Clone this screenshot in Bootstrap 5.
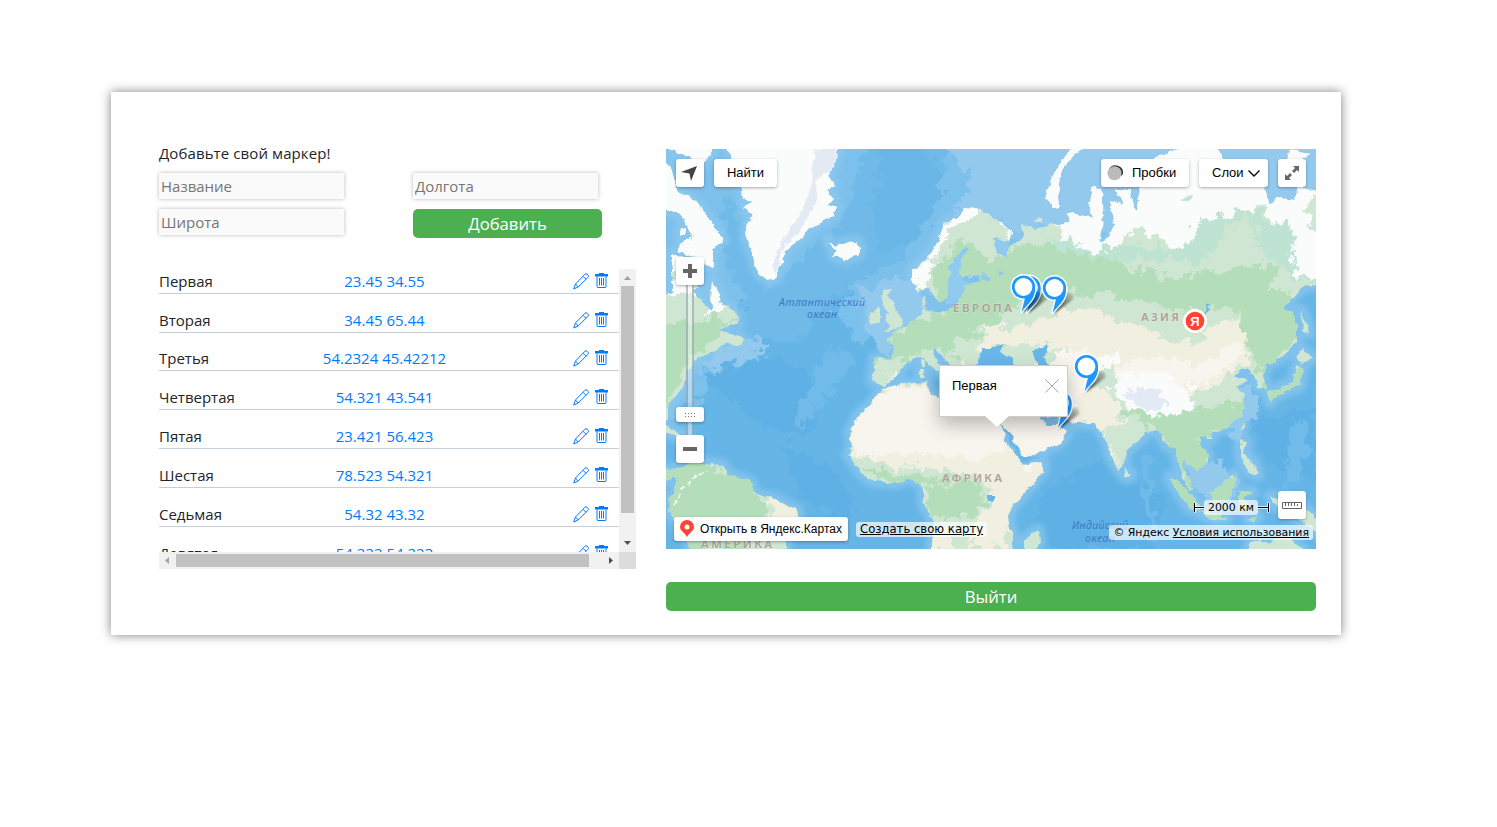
<!DOCTYPE html>
<html lang="ru">
<head>
<meta charset="utf-8">
<meta name="viewport" content="width=device-width, initial-scale=1">
<title>Маркеры</title>
<link href="https://cdn.jsdelivr.net/npm/bootstrap@5.3.0/dist/css/bootstrap.min.css" rel="stylesheet">
<style>
body{font-family:"Open Sans","Noto Sans",sans-serif;font-size:15px;line-height:24px;color:#212529;background:#fff;min-height:100vh;display:flow-root}
.panel{width:1230px;height:543px;margin:92px 0 0 111px;padding:0 25px 0 48px;box-shadow:0 0 10px rgba(0,0,0,.5);gap:30px}
.side{width:477px;padding-top:49px}
.fields{display:grid;grid-template-columns:254px 189px;row-gap:10px;margin-top:8px}
.field{width:185px;height:26px;border:0;border-radius:0;padding:1px 2px 2px;background:#fafafa;box-shadow:0 0 4px rgba(0,0,0,.28);font-size:15px;line-height:22px}
.field::placeholder{color:#757575;opacity:1}
.btn-go{--bs-btn-color:#fff;--bs-btn-bg:#4caf50;--bs-btn-hover-bg:#43a047;--bs-btn-hover-color:#fff;border:0;border-radius:5px;height:29px;padding:0;font-size:16.7px;line-height:29px}
.listbox{height:300px;margin-top:31px;display:grid;grid-template-columns:460px 17px;grid-template-rows:283px 17px}
.item{height:25px;border-bottom:1px solid #c3d0da;margin-bottom:13.83px;display:grid;grid-template-columns:150px 151px 1fr;line-height:24px;color:#212529}
.item:first-child{margin-top:-.3px}
.coords{color:#007bff;text-align:center;white-space:nowrap}
.sb{background:#f1f1f1}
.thumb{background:#c1c1c1}
.map{width:650px;height:400px;margin-top:57px}
.map>svg{display:block}
.ctl{background:#fff;border-radius:3px;box-shadow:0 1px 3px rgba(0,0,0,.32);height:28px;font:13px/27px "Liberation Sans",Arial,sans-serif;color:#000}
.sq{width:28px}
.topbar{left:10px;right:10px;top:10px}
.zoom{left:10px;top:108px;width:28px;height:206px}
.track{left:10px;top:26px;width:8px;height:154px;background:rgba(255,255,255,.4);border:solid rgba(90,110,120,.4);border-width:0 2px}
.balloon{left:273px;top:216px;width:129px;height:52px;background:#fff;border:1px solid #ccc;box-shadow:0 8px 18px rgba(0,0,0,.25);font:13px/18px "Liberation Sans",Arial,sans-serif;color:#000;padding:11px 8px 0 12px}
.chip{background:rgba(255,255,255,.68);border-radius:3px;color:#000;font-family:"DejaVu Sans",Verdana,sans-serif;font-size:10.9px;line-height:15px;white-space:nowrap}
</style>
</head>
<body>
<main class="panel d-flex">
  <section class="side">
    <div style="letter-spacing:.1px">Добавьте свой маркер!</div>
    <form class="fields">
      <input class="form-control field" placeholder="Название">
      <input class="form-control field" placeholder="Долгота">
      <input class="form-control field" placeholder="Широта">
      <button type="button" class="btn btn-go w-100">Добавить</button>
    </form>
    <div class="listbox">
      <div class="overflow-hidden" id="items"></div>
      <div class="sb d-flex flex-column align-items-center">
        <svg width="17" height="17"><path d="M5 11h7L8.500 7z" fill="#a3a3a3"/></svg>
        <div class="thumb flex-shrink-0" style="width:13px;height:227px"></div>
        <svg class="mt-auto" width="17" height="17"><path d="M5 6h7l-3.500 4z" fill="#505050"/></svg>
      </div>
      <div class="sb d-flex align-items-center">
        <svg width="17" height="17"><path d="M10 5v7L6 8.500z" fill="#a3a3a3"/></svg>
        <div class="thumb" style="width:413px;height:13px"></div>
        <svg class="ms-auto" width="17" height="17"><path d="M7 5v7l4-3.500z" fill="#505050"/></svg>
      </div>
      <div style="background:#dcdcdc"></div>
    </div>
  </section>
  <section>
    <div class="map position-relative overflow-hidden">
      <svg width="650" height="400" viewBox="666 149 650 400">
        <defs>
          <filter id="rough" filterUnits="userSpaceOnUse" x="656" y="139" width="670" height="420"><feTurbulence type="fractalNoise" baseFrequency=".13" numOctaves="4" seed="4"/><feDisplacementMap in="SourceGraphic" scale="6" xChannelSelector="R" yChannelSelector="G"/></filter>
          <filter id="rougher" filterUnits="userSpaceOnUse" x="656" y="139" width="670" height="420"><feTurbulence type="fractalNoise" baseFrequency=".09" numOctaves="5" seed="9"/><feDisplacementMap in="SourceGraphic" scale="24" xChannelSelector="R" yChannelSelector="G"/></filter>
          <filter id="sea" filterUnits="userSpaceOnUse" x="656" y="139" width="670" height="420"><feGaussianBlur stdDeviation="2.500"/></filter>
          <filter id="ds" x="-50%" y="-50%" width="200%" height="200%"><feGaussianBlur stdDeviation="1"/></filter>
          <linearGradient id="sh" x1="0" y1="1" x2="1" y2="0"><stop offset="0" stop-color="#000" stop-opacity=".85"/><stop offset="1" stop-color="#000" stop-opacity=".1"/></linearGradient>
          <!-- all coastlines: Eurasia, Africa, the Americas, Greenland, islands -->
          <path id="land" d="M965 208L958 218L945 222L942 230L935 247L928 257L917 267L912 270V280L918 292L928 287L933 297L940 303L948 297L947 283L950 273L948 267L957 257L962 247L968 246V252L960 263V272L962 277L980 275V281L963 287L967 290L960 297L958 303L947 310L930 312L923 307L927 297L922 300L923 313L913 322L903 327L898 330L890 338L885 340L895 345L892 357L875 358L872 380L877 383L883 387L888 383L895 378L900 370L907 362L917 357L923 358L933 368L943 374L951 374L933 357L935 349L947 362L957 372L966 380L970 366L978 363L980 355L983 348L992 348L998 356L1008 356L1015 366V400L1000 423L1010 434L1022 458L1037 453L1060 443L1068 432L1058 425L1047 425L1040 415L1060 418L1077 423H1095L1100 431L1105 436L1110 453L1118 470L1123 467L1127 450L1143 437L1148 432L1158 430L1165 443L1170 448L1175 447L1178 463L1183 480L1190 490L1193 490L1190 480L1182 468L1183 459L1192 465L1197 470L1208 462V455L1200 443V437L1210 433L1227 428L1242 415L1245 408L1243 393L1237 387L1247 380L1233 377L1243 368L1253 372L1258 388L1266 389L1263 377L1267 365L1283 357L1297 340V327L1293 312L1283 308L1290 300L1303 287L1326 283V193L1298 187L1295 200L1277 197L1270 205L1264 187L1245 170L1228 168L1222 162L1217 140L1180 149L1160 155L1145 163L1140 190L1136 210L1130 188L1114 190L1120 204L1110 200L1114 225L1108 235L1100 242L1104 220L1102 190L1093 187L1088 205L1093 218L1080 215L1067 212L1070 222L1060 225L1050 223L1035 230L1030 228L1022 225L1023 237L1010 247L1005 257L997 253L993 238L1012 240L1013 230L997 220L982 210Z
            M883 388L907 383L928 382L927 390L938 397L990 398L1000 423L1007 443L1023 465L1043 462V470L1030 487L1012 507L1008 517L1013 537L1012 549L1004 560H934L932 549L933 520L923 503V487L910 478L897 483L880 482L873 482L860 472L852 460L848 455L852 447L850 433L857 417L872 403L877 395Z
            M656 474L664 470L672 469L680 467L690 464L703 463L722 465L730 475L750 482L757 495L773 498L797 510L798 517L787 540V560H697L687 540L670 513L668 500L675 490L677 477L666 480H656z
            M656 300L680 287H690L705 305L712 310L720 302L737 313L738 323L718 330L735 334L745 340L738 346L726 343L697 360L687 372L683 387L673 400L668 405V420L663 425H656z M656 425L670 428L690 438L680 438L666 432z
            M656 160L670 166L677 190L697 203L710 220L723 238L713 250V268L703 263L677 250L683 243L693 237L680 213L656 210z M713 282L720 297L716 311L711 299z M672 255L686 260L700 288L672 290z M681 228h5v7h-6z M666 140H715L710 156L700 165L690 158L670 150z
            M725 140L735 165L742 187L743 198L752 203L743 207L753 216L746 227L747 240L752 253L757 270L763 277L772 281L777 278V270L783 262L785 250L803 237L807 230L833 215L837 208L826 205L835 200L827 190L834 185L827 177L835 163L840 140z
            M828 242L835 246L846 242L856 241L860 248L858 255L845 260L833 255L836 251z
            M1095 140L1073 155L1063 170L1058 187L1060 207L1052 208L1045 198L1050 183L1057 167L1067 153L1080 145z M1037 218h5v4h-6z M1290 150L1310 154L1300 164L1288 160z
            M883 290L892 289L888 297L894 303L898 313L903 320L900 328L883 332L890 325L885 321L888 312L882 305z M870 312L880 307V322L870 325z
            M920 369h4v10h-4z M922 360h3v7h-3z M1169 477L1178 480L1190 493L1200 505V511L1190 509L1180 495z M1198 512L1212 513L1227 518L1215 520z M1209 492L1220 486L1233 474L1236 480L1229 500L1214 502z M1239 491L1253 492L1243 497L1250 507L1239 508z M1240 440L1247 443L1244 453L1252 461L1258 475L1250 473L1240 458z M1240 424L1244 421L1242 432z M1267 391L1280 388L1293 381L1296 367L1302 368L1300 386L1285 392L1273 397L1270 403z M1297 355L1303 349L1312 358L1301 366z M1301 310L1305 318L1309 333L1303 331z M1124 469L1131 474L1128 478L1124 477z M1270 496L1285 500L1300 504L1318 520V534L1300 520L1276 506z M1247 560L1250 543L1260 539L1270 544L1277 537L1290 536L1305 553z M1025 540L1038 530L1040 540L1034 560H1025z M1206 434h6v5h-5z M1248 520l10-4-4 6z"/>
          <clipPath id="cl"><use href="#land"/></clipPath>
        </defs>
        <rect x="666" y="149" width="650" height="400" fill="#65b5e7"/>
        <g filter="url(#rougher)">
          <path d="M656 139H1326V215L1000 240L900 310L860 345L835 310L860 275L820 285L780 300L740 300L700 400L656 420z" fill="#7cc0ec"/>
          <path d="M795 265L840 225L870 139H960L915 220L900 260L870 275L830 300L800 340L740 340L745 300L725 260V190L745 230L765 290z" fill="#6fbae9"/>
          <path d="M885 139H922L938 175L940 205L915 240L885 250L868 228z" fill="#69b6e7"/>
          <path d="M700 375L780 355L820 385L810 435L760 425zM780 440L840 475L860 520L800 500zM1040 490L1100 460L1165 500L1155 549H1030zM1255 420L1316 405V480L1260 460z" fill="#5fb1e5"/>
          <path d="M835 345L855 360L830 395L800 430L795 410zM1140 455L1150 540L1158 545L1149 455zM1290 430L1300 420L1310 450L1300 480L1285 490z" fill="#6fbbe9"/>
        </g>
        <g filter="url(#sea)"><use href="#land" fill="#90caee" stroke="#90caee" stroke-width="13" stroke-linejoin="round" opacity=".65"/></g>
        <g filter="url(#rougher)" fill="#92c9ed">
          <path d="M940 139H1326V230H1010L965 210L950 215L975 180z"/>
          <path d="M860 290L915 275L930 310L900 335L888 358L870 340zM1180 455L1215 460L1240 480L1220 510L1195 490zM1235 385L1262 392L1262 415L1245 420L1240 440L1225 430zM725 345L765 335L765 355L735 362L700 370z"/>
        </g>
        <path d="M948 266L970 246V260L962 280L983 283L960 300L945 305zM992 240L1012 238L1005 258H994z" fill="#90caee" filter="url(#rough)"/>
        <g filter="url(#rough)">
          <g clip-path="url(#cl)">
            <rect x="656" y="139" width="670" height="420" fill="#cee6d2"/>
            <g filter="url(#rougher)">
              <path d="M935 260L960 235L975 250L990 265L1015 245L1060 248L1100 252L1130 268L1180 280L1225 262L1280 268L1265 300L1225 305L1190 312L1160 305L1130 300L1100 295L1065 290L1010 305L1000 325L970 335L945 350L960 362L930 350L905 362L885 345L910 322L945 312L935 290zM865 355L900 355L895 362L866 366zM1230 300L1300 290V340L1262 375L1250 350zM1120 410L1160 398L1190 408L1245 402L1246 425L1200 440L1215 465L1185 480L1165 440L1140 420zM656 325L735 318L690 360L656 430zM656 455L740 470L770 505L750 549H680L665 505zM925 485L980 482L985 505L960 520L925 515zM855 468L905 474L960 478L900 488zM1160 475h110v50h-110zM1262 365h50v40h-50z" fill="#b3deb9"/>
              <path d="M925 255L945 225L970 212L1000 225L985 235L960 235L940 262z" fill="#cee6d2"/>
              <path d="M1040 232L1100 246L1145 248L1175 250L1195 219L1235 205L1265 215L1290 245L1316 265V290L1280 267L1245 240L1215 250L1195 262L1150 255L1120 262L1060 250z" fill="#bfe3d3"/>
              <path d="M1225 232L1245 212L1258 240L1240 268L1200 275z" fill="#cee6d2"/>
              <path d="M975 350L990 328L1030 325L1060 310L1095 308L1130 325L1165 330L1205 330L1235 318L1248 340L1243 365L1215 385L1190 392L1140 375L1100 365L1080 355L1040 345z" fill="#f0efe0"/>
              <path d="M1150 326L1185 318L1200 330L1205 345L1190 340L1170 342z" fill="#cee6d2"/>
              <path d="M940 375L1060 365L1110 395L1125 420L1110 430L1060 420L1020 400zM1105 430L1120 470L1110 455zM885 370L895 372L890 380zM960 360L990 368L960 372z" fill="#f0efe0"/>
              <path d="M840 390L1000 375L1015 450L1050 455L1040 480L1000 549H970L975 520L995 500L985 480L950 470L900 467L845 455zM770 500h30v40h-22z" fill="#f0efe0"/>
              <path d="M920 530h30v25h-25z" fill="#f0efe0"/>
              <path d="M842 440V405L880 390L940 385L1000 400L1012 445L980 460L900 452L870 458zM1000 405L1060 395L1075 415V450L1022 465zM1045 358L1080 345L1100 365L1080 400L1050 395zM1115 370L1150 358L1200 365L1240 340L1240 360L1200 385L1170 380L1115 385z" fill="#f8f5ef"/>
              <path d="M1108 388L1128 372L1165 372L1194 390L1190 412L1160 418L1125 405zM1085 360L1120 356L1108 371z" fill="#fafcfb"/>
              <path d="M1124 392L1150 385L1166 402L1155 412L1132 402z" fill="#e4eaf3"/>
              <path d="M656 139H870V270H700L656 265zM930 262L935 230L965 203L985 210L965 218L950 230zM912 268L935 262L915 295zM995 216L1015 228 1010 240zM1030 139H1326V185L1305 210L1326 250V290L1300 275L1282 240L1265 208L1235 211L1200 221L1182 255L1160 238L1140 228L1115 248L1085 248L1060 236zM707 280h14v35h-14zM666 280h25v15h-25z" fill="#fafcfb"/>
              <path d="M1268 228L1288 216L1294 250L1276 255z" fill="#bfe3d3"/>
            </g>
            <path d="M820 235h45v30h-45zM720 139h125v150h-125zM1035 130h68v85h-68zM656 139h70v131h-70z" fill="#fafcfb"/>
            <path d="M815 149H838L832 170L815 180L818 200L800 230L785 245L775 275L772 265L782 240L800 215L810 190z" fill="#e4eaf3"/>
            <path d="M1185 196l8-2-4 7-8 2z" fill="#bfe3d3"/>
          </g>
          <path d="M1033 350L1047 345L1048 352L1042 356L1050 366V380L1040 375zM978 364L983 348L992 348L1000 345L1005 344L1000 350L1013 360V368H978zM1000 423L1022 463L1040 456L1022 456L1010 434zM988 495h6v7h-6zM996 523l2 12zM1209 304l-4 12-2 0 4-11z" fill="#69b7e8"/>
          <path d="M983 273l7 6-4 2-5-3zM999 270l3 4-3 1z" fill="#90caee"/>
          <path d="M1107 190L1104 220 1112 226 1107 236 1100 241M1113 190L1122 204M1132 190L1136 210" stroke="#90caee" stroke-width="3" fill="none"/>
          <path d="M675 505L680 492L694 477L708 472" stroke="#fff" stroke-width="1.500" fill="none" stroke-dasharray="5 3"/>
        </g>
        <g font-family="Noto Sans, Open Sans, sans-serif" fill="#b09f95" stroke="#fff" stroke-opacity=".35" stroke-width="1" paint-order="stroke" font-size="11.500" font-weight="600">
          <text x="953" y="312" textLength="59">ЕВРОПА</text>
          <text x="1141" y="321" textLength="38">АЗИЯ</text>
          <text x="942" y="482" textLength="60">АФРИКА</text>
          <text x="701" y="548" textLength="71">АМЕРИКА</text>
        </g>
        <g font-family="Noto Sans, Open Sans, sans-serif" font-style="italic" font-size="10.500" fill="#3f78c4">
          <text x="779" y="306" textLength="86">Атлантический</text><text x="807" y="318" textLength="30">океан</text>
          <text x="1072" y="529" textLength="56">Индийский</text><text x="1085" y="541.500" textLength="30">океан</text>
        </g>
        <defs><g id="pin">
          <path d="M-1 1L19-14C20-20 14-23 8-18z" fill="url(#sh)" filter="url(#ds)"/>
          <circle cx="0" cy="-25" r="13" fill="#fff"/>
          <path d="M-2 0L1.500-14L11.500-25C12.500-13 4-8-2 0z" fill="#1e98ff" stroke="#fff" stroke-width="2.600" paint-order="stroke" stroke-linejoin="round"/>
          <circle cx="0" cy="-25" r="11.600" fill="#1e98ff"/><circle cx="0" cy="-25" r="8.900" fill="#fff"/>
        </g></defs>
        <use href="#pin" x="1029" y="312.500"/><use href="#pin" x="1023.500" y="312"/><use href="#pin" x="1054.500" y="313"/><use href="#pin" x="1060" y="428"/><use href="#pin" x="1086.500" y="391.500"/>
        <circle cx="1195" cy="321" r="12" fill="#fff"/><circle cx="1195" cy="321" r="9.300" fill="#ff4433"/>
        <text x="1195" y="325.500" text-anchor="middle" font-family="Liberation Sans, sans-serif" font-size="13" font-weight="bold" fill="#fff">Я</text>
      </svg>

      <div class="topbar position-absolute d-flex">
        <div class="ctl sq"><svg class="d-block" width="28" height="28"><path d="M5 13L21 7L15 22L13.500 14.500z" fill="#444"/></svg></div>
        <div class="ctl text-center" style="width:63px;margin-left:10px">Найти</div>
        <div class="ctl d-flex ms-auto" style="width:88px"><svg width="31" height="28"><path d="M8 10A7.600 7.600 0 0 1 22 15L20 17z" fill="#333"/><circle cx="13.500" cy="14.300" r="7" fill="#bbb"/></svg>Пробки</div>
        <div class="ctl d-flex" style="width:69px;margin-left:10px;padding-left:13px">Слои<svg width="20" height="28"><path d="M4.500 11.500L10 17L15.500 11.500" fill="none" stroke="#000" stroke-width="1.300"/></svg></div>
        <div class="ctl sq" style="margin-left:10px"><svg class="d-block" width="28" height="28"><path d="M15 7h6v6l-2-2-3 3-2-2 3-3zM7 15l2 2 3-3 2 2-3 3 2 2H7z" fill="#666"/></svg></div>
      </div>

      <div class="zoom position-absolute">
        <div class="track position-absolute"></div>
        <div class="ctl sq position-relative"><svg class="d-block" width="28" height="28"><path d="M7 12h5V7h4v5h5v4h-5v5h-4v-5H7z" fill="#666"/></svg></div>
        <div class="ctl sq position-relative" style="height:15px;margin-top:122px"><svg class="d-block" width="28" height="15"><path d="M9 6.500h11M9 9.500h11" stroke="#777" stroke-dasharray="1 2"/></svg></div>
        <div class="ctl sq position-relative" style="margin-top:13px"><svg class="d-block" width="28" height="28"><path d="M7 12h14v4H7z" fill="#666"/></svg></div>
      </div>

      <div class="balloon position-absolute d-flex justify-content-between align-items-start">Первая
        <svg width="14" height="18"><path d="M.500 2.500l13 13M13.500 2.500l-13 13" stroke="#aaa" fill="none"/></svg>
        <svg class="position-absolute" style="left:45px;top:50px" width="24" height="12"><path d="M0 0h24L12 11z" fill="#fff"/></svg>
      </div>

      <div class="ctl position-absolute d-flex" style="left:8px;bottom:8px;width:174px;height:24px;font-size:12px;line-height:24px"><svg width="26" height="24"><path d="M13 20.500C12 16 6 14.500 6 10a7 7 0 0 1 14 0C20 14.500 14 16 13 20.500z" fill="#ff4433"/><circle cx="13" cy="10" r="2.500" fill="#fff"/></svg><span>Открыть в Яндекс.Картах</span></div>
      <div class="chip position-absolute" style="left:190px;bottom:12px;padding:0 4px;font-size:11.65px"><u>Создать свою карту</u></div>
      <div class="position-absolute d-flex align-items-center" style="left:528px;top:351px">
        <svg width="10" height="15"><path d="M1 2.500v10M1 7.500h9" stroke="#fff" stroke-opacity=".7" stroke-width="3" fill="none"/><path d="M.500 3v9M.500 7.500h9.500" stroke="#000" fill="none"/></svg>
        <div class="chip text-center" style="width:54px">2000 км</div>
        <svg width="12" height="15"><path d="M0 7.500h10.500M10.500 2.500v10" stroke="#fff" stroke-opacity=".7" stroke-width="3" fill="none"/><path d="M0 7.500h10.500M10.500 3v9" stroke="#000" fill="none"/></svg>
      </div>
      <div class="ctl sq position-absolute" style="right:10px;top:342px"><svg class="d-block" width="28" height="28"><path d="M4.500 11.500h19v6h-19zM7.500 12v3M10.500 12v3M13.500 12v3M16.500 12v3M19.500 13v2" fill="none" stroke="#666"/></svg></div>
      <div class="chip position-absolute" style="right:3px;bottom:9px;padding:0 4px">© Яндекс <u>Условия использования</u></div>
    </div>
    <button type="button" class="btn btn-go w-100 d-block" style="margin-top:33px">Выйти</button>
  </section>
</main>
<script src="https://cdn.jsdelivr.net/npm/bootstrap@5.3.0/dist/js/bootstrap.bundle.min.js"></script>
<script>
const markers = [["Первая","23.45 34.55"],["Вторая","34.45 65.44"],["Третья","54.2324 45.42212"],["Четвертая","54.321 43.541"],["Пятая","23.421 56.423"],["Шестая","78.523 54.321"],["Седьмая","54.32 43.32"],["Девятая","54.222 54.223"]];
document.getElementById("items").innerHTML = markers.map(([name, pos]) => `<div class="item"><span>${name}</span><span class="coords">${pos}</span><span class="d-flex" style="padding-left:113px"><svg width="16" height="25" fill="none" stroke="#007bff"><path d="M.700 20L2.500 15 12 5.200Q13 4.200 14 5.200L15 6.200Q16 7.200 15 8.200L5.200 18zM2.500 15L5.200 18M10 7.300L13 10.300"/></svg><svg width="13" height="25" style="margin-left:6px" fill="none" stroke="#007bff"><path d="M2 7.500V17.500Q2 18.500 3 18.500H10Q11 18.500 11 17.500V7.500M4.500 9V16.500M6.500 9V16.500M8.500 9V16.500"/><path d="M0 5H4V4H9V5H13V7.500H0z" fill="#007bff" stroke="none"/></svg></span></div>`).join("");
</script>
</body>
</html>
